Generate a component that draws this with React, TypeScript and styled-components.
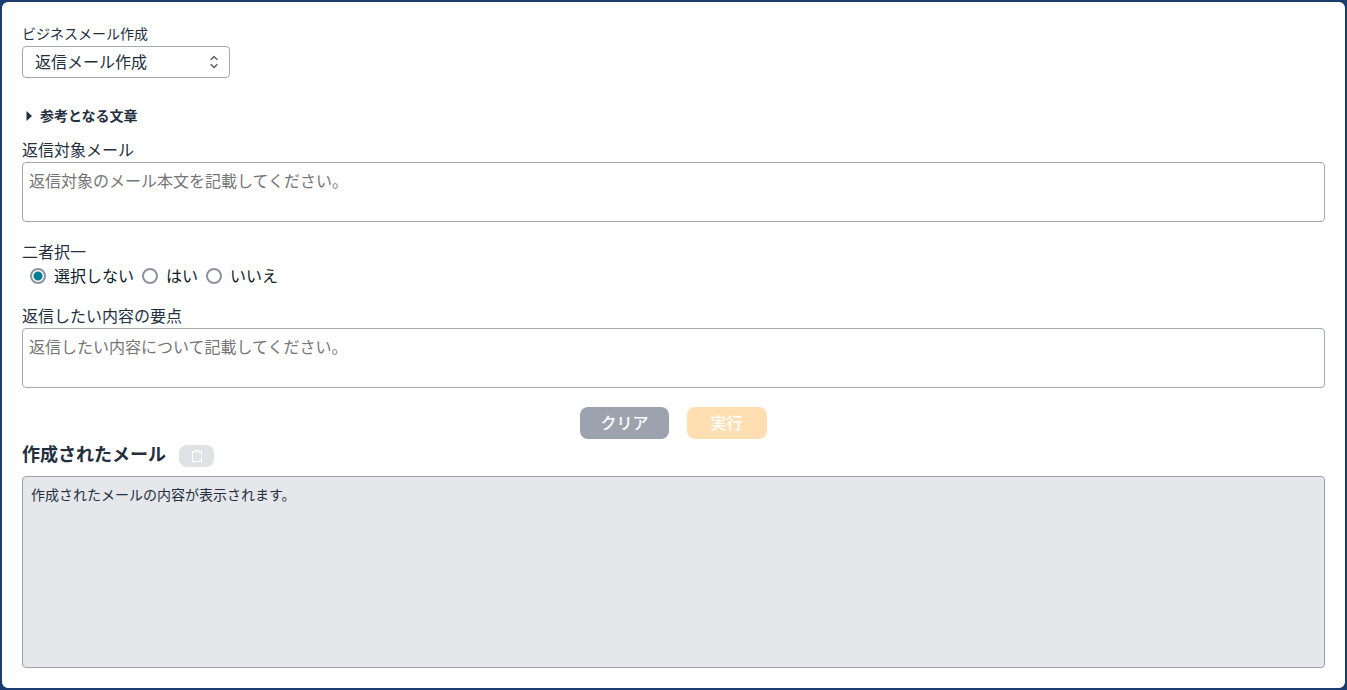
import React, { useState } from "react";
import styled, { createGlobalStyle } from "styled-components";

const GlobalStyle = createGlobalStyle`
  *, *::before, *::after { box-sizing: border-box; }
  body {
    margin: 0;
    background: #1b3c6e;
    color: #232f3e;
    font-family: "Noto Sans", "Noto Sans CJK JP", sans-serif;
    font-size: 16px;
    line-height: 24px;
  }
  button, select, textarea { font: inherit; color: inherit; margin: 0; }
`;

const Page = styled.main`
  display: flex;
  flex-direction: column;
  min-height: 100vh;
  padding: 22px 20px 20px;
  border: 2px solid #1b3c6e;
  border-radius: 8px;
  background: #fff;
`;

const Field = styled.div<{ $gap: number }>`
  display: flex;
  flex-direction: column;
  align-items: stretch;
  margin-bottom: ${(p) => p.$gap}px;
`;

const Label = styled.label<{ $small?: boolean }>`
  align-self: flex-start;
  font-size: ${(p) => (p.$small ? 14 : 16)}px;
  line-height: ${(p) => (p.$small ? 20 : 24)}px;
  margin-bottom: ${(p) => (p.$small ? 2 : 0)}px;
`;

const SelectWrap = styled.div`
  position: relative;
  width: 208px;
`;

const Select = styled.select`
  appearance: none;
  display: block;
  width: 100%;
  height: 32px;
  padding: 0 32px 0 12px;
  border: 1px solid #a6a9ad;
  border-radius: 4px;
  background: #fff;
`;

const SelectIcon = styled.svg`
  position: absolute;
  right: 6px;
  top: 6px;
  pointer-events: none;
`;

const Details = styled.details`
  margin-bottom: 12px;
  font-size: 14px;
  line-height: 20px;
`;

const Summary = styled.summary`
  display: flex;
  align-items: center;
  gap: 8px;
  padding-left: 4px;
  font-weight: 700;
  list-style: none;
  cursor: pointer;
  &::-webkit-details-marker { display: none; }
`;

const TextArea = styled.textarea`
  display: block;
  width: 100%;
  height: 60px;
  padding: 6px;
  border: 1px solid #a6a9ad;
  border-radius: 4px;
  background: #fff;
  resize: none;
  &::placeholder { color: #757575; opacity: 1; }
`;

const RadioGroup = styled.fieldset`
  margin: 0 0 16px;
  padding: 0;
  border: 0;
`;

const Legend = styled.legend`
  padding: 0;
`;

const RadioRow = styled.div`
  display: flex;
  gap: 8px;
  padding-left: 8px;
`;

const RadioLabel = styled.label`
  display: flex;
  align-items: center;
  gap: 8px;
  color: #0d1926;
`;

const Radio = styled.input`
  appearance: none;
  width: 16px;
  height: 16px;
  margin: 0;
  border: 2px solid #8c939e;
  border-radius: 50%;
  background: #fff;
  &:checked { background: radial-gradient(circle, #047d95 4px, #fff 5px); }
`;

const Actions = styled.div`
  display: flex;
  justify-content: center;
  gap: 18px;
`;

const Button = styled.button<{ $kind: "clear" | "run" }>`
  height: 32px;
  padding: 0 ${(p) => (p.$kind === "clear" ? 20 : 24)}px;
  border: 0;
  border-radius: 8px;
  background: ${(p) => (p.$kind === "clear" ? "#9ca3af" : "#ffdfb1")};
  color: #fff;
  font-weight: 500;
`;

const ResultHeader = styled.div`
  display: flex;
  align-items: center;
  gap: 13px;
  margin: 1px 0 8px;
`;

const Heading = styled.h2`
  margin: 0;
  font-size: 18px;
  line-height: 28px;
  font-weight: 700;
`;

const CopyButton = styled.button`
  display: flex;
  align-items: center;
  justify-content: center;
  width: 35px;
  height: 22px;
  margin-top: 4px;
  padding: 0;
  border: 0;
  border-radius: 8px;
  background: #e0e2e6;
  color: #fff;
`;

const Result = styled.output`
  display: block;
  flex: 1;
  min-height: 120px;
  padding: 8px;
  border: 1px solid #9ca3af;
  border-radius: 4px;
  background: #e5e7eb;
  font-size: 14px;
  line-height: 20px;
`;

const choices = ["選択しない", "はい", "いいえ"];

export default function App() {
  const [choice, setChoice] = useState(choices[0]);
  const [source, setSource] = useState("");
  const [points, setPoints] = useState("");

  const clear = () => {
    setChoice(choices[0]);
    setSource("");
    setPoints("");
  };

  return (
    <>
      <GlobalStyle />
      <Page>
        <Field $gap={28}>
          <Label $small htmlFor="mail-type">ビジネスメール作成</Label>
          <SelectWrap>
            <Select id="mail-type">
              <option>返信メール作成</option>
            </Select>
            <SelectIcon width="20" height="20" viewBox="0 0 20 20" fill="none" stroke="#4b5563" strokeWidth="1.2" strokeLinecap="round" strokeLinejoin="round" aria-hidden="true">
              <path d="M7 7.5 10 4.5 13 7.5M7 12.5 10 15.5 13 12.5" />
            </SelectIcon>
          </SelectWrap>
        </Field>

        <Details>
          <Summary>
            <svg width="6" height="10" viewBox="0 0 6 10" fill="currentColor" aria-hidden="true">
              <path d="M0.5 0 6 5 0.5 10z" />
            </svg>
            参考となる文章
          </Summary>
        </Details>

        <Field $gap={18}>
          <Label htmlFor="source">返信対象メール</Label>
          <TextArea id="source" value={source} onChange={(e) => setSource(e.target.value)} placeholder="返信対象のメール本文を記載してください。" />
        </Field>

        <RadioGroup>
          <Legend>二者択一</Legend>
          <RadioRow>
            {choices.map((name) => (
              <RadioLabel key={name}>
                <Radio type="radio" name="choice" checked={choice === name} onChange={() => setChoice(name)} />
                {name}
              </RadioLabel>
            ))}
          </RadioRow>
        </RadioGroup>

        <Field $gap={19}>
          <Label htmlFor="points">返信したい内容の要点</Label>
          <TextArea id="points" value={points} onChange={(e) => setPoints(e.target.value)} placeholder="返信したい内容について記載してください。" />
        </Field>

        <Actions>
          <Button type="button" $kind="clear" onClick={clear}>クリア</Button>
          <Button type="button" $kind="run" disabled>実行</Button>
        </Actions>

        <ResultHeader>
          <Heading>作成されたメール</Heading>
          <CopyButton type="button" disabled aria-label="コピー">
            <svg width="12" height="12" viewBox="0 0 12 12" fill="none" stroke="currentColor" aria-hidden="true">
              <path d="M4 1.5H1.5V11.5H10.5V1.5H8" />
              <path d="M4 0.5H8V2.5H4z" />
            </svg>
          </CopyButton>
        </ResultHeader>
        <Result>作成されたメールの内容が表示されます。</Result>
      </Page>
    </>
  );
}
